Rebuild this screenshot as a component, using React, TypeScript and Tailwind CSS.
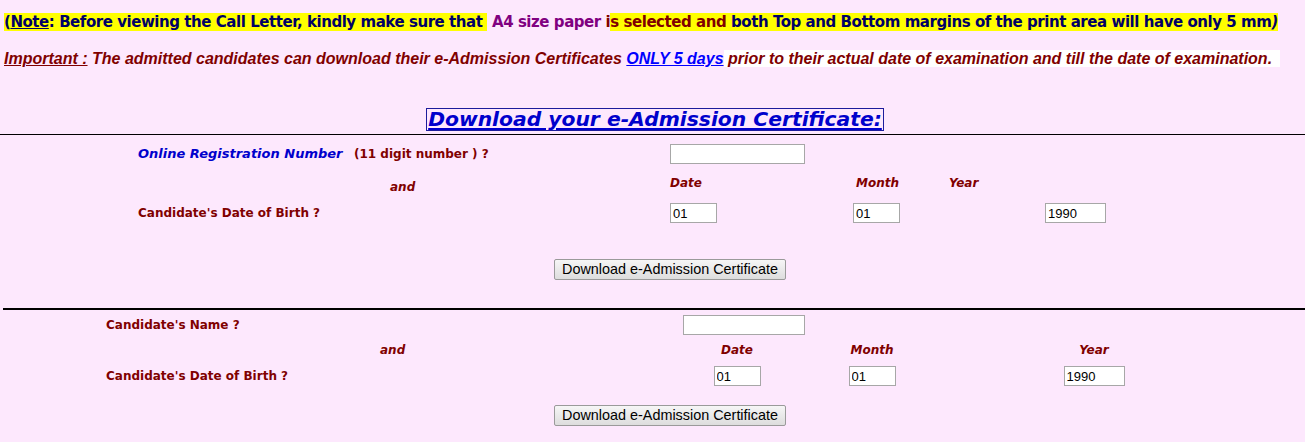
import React from 'react'

const verdana = { fontFamily: '"DejaVu Sans", Verdana, sans-serif' }

function Box({ w, value }: { w: string; value?: string }) {
  return (
    <input
      defaultValue={value}
      className={`${w} h-[20px] border border-[#a7a7a7] bg-white px-[2px] text-[13px] font-normal not-italic text-black outline-none font-['Liberation_Sans',Arial,sans-serif]`}
    />
  )
}

function DownloadButton() {
  return (
    <button className="h-[21px] w-[232px] rounded-[2px] border border-[#9a9a9a] bg-gradient-to-b from-[#f6f6f6] to-[#dddddd] text-[14.4px] font-normal leading-none text-black font-['Liberation_Sans',Arial,sans-serif]">
      Download e-Admission Certificate
    </button>
  )
}

export default function App() {
  return (
    <div className="min-h-screen w-full bg-[#fde8fd] font-['DejaVu_Sans',Verdana,sans-serif]">
      {/* note line */}
      <div className="flex h-[45px] items-center pl-[4px]">
        <p className="whitespace-nowrap text-[15px] font-bold leading-[19px] tracking-[-0.45px]">
          <span className="bg-[#ffff00] text-[#000066]">
            (<u>Note</u>: Before viewing the Call Letter, kindly make sure that&nbsp;
          </span>
          <span className="text-[#800080]">&nbsp;A4 size paper </span>
          <span className="text-[#800000]">i</span>
          <span className="bg-[#ffff00] text-[#800000]">s selected and</span>
          <span className="bg-[#ffff00] text-[#000066]">
            {' '}both Top and Bottom margins of the print area will have only 5 mm<i>)</i>
          </span>
        </p>
      </div>

      <div className="flex h-[27px] items-center pl-[4px]">
        <p className="whitespace-nowrap text-[16px] font-bold italic leading-[19px] text-[#800000] font-['Liberation_Sans',Arial,sans-serif]">
          <u>Important :</u> The admitted candidates can download their e-Admission Certificates{' '}
          <u className="text-[#0000ff]">ONLY 5 days</u>
          <span className="bg-white pr-[8px]"> prior to their actual date of examination and till the date of examination.</span>
        </p>
      </div>

      {/* heading */}
      <div className="flex h-[59px] items-end justify-center pl-[5px]">
        <div className="flex h-[23px] items-end border border-[#1c1c9c] px-[1px]">
          <span className="whitespace-nowrap text-[20.3px] font-bold italic leading-[22px] text-[#0000cc] underline" style={verdana}>
            Download your e-Admission Certificate:
          </span>
        </div>
      </div>
      <div className="h-[3px]" />
      <div className="h-px bg-black" />

      {/* section 1 */}
      <div className="text-[12px] font-bold text-[#800000]">
        <div className="flex h-[38px] items-center pl-[138px]">
          <div className="flex w-[532px] items-center">
            <span className="w-[216px] text-[13px] italic text-[#0000cc]">Online Registration Number</span>
            <span>(11 digit number ) ?</span>
          </div>
          <Box w="w-[135px]" />
        </div>
        <div className="flex h-[26px] items-start pl-[138px] italic">
          <span className="w-[532px] pl-[252px] pt-[5px]">and</span>
          <span className="w-[186px] pt-[1px]">Date</span>
          <span className="w-[93px] pt-[1px]">Month</span>
          <span className="pt-[1px]">Year</span>
        </div>
        <div className="flex h-[28px] items-center pl-[138px]">
          <span className="w-[532px]">Candidate's Date of Birth ?</span>
          <div className="w-[183px]">
            <Box w="w-[47px]" value="01" />
          </div>
          <div className="w-[192px]">
            <Box w="w-[47px]" value="01" />
          </div>
          <Box w="w-[61px]" value="1990" />
        </div>
        <div className="h-[32px]" />
        <div className="pl-[554px]">
          <DownloadButton />
        </div>
        <div className="h-[28px]" />
      </div>
      <div className="ml-[3px] h-[2px] bg-black" />

      {/* section 2 */}
      <div className="text-[12px] font-bold text-[#800000]">
        <div className="flex h-[30px] items-center pl-[106px]">
          <span className="w-[577px]">Candidate's Name ?</span>
          <Box w="w-[122px]" />
        </div>
        <div className="flex h-[20px] items-center pl-[106px] italic">
          <span className="w-[577px] pl-[274px]">and</span>
          <span className="w-[108px] text-center">Date</span>
          <span className="w-[162px] text-center">Month</span>
          <span className="w-[282px] text-center">Year</span>
        </div>
        <div className="flex h-[32px] items-center pl-[106px]">
          <span className="w-[577px]">Candidate's Date of Birth ?</span>
          <div className="flex w-[108px] justify-center">
            <Box w="w-[47px]" value="01" />
          </div>
          <div className="flex w-[162px] justify-center">
            <Box w="w-[47px]" value="01" />
          </div>
          <div className="flex w-[282px] justify-center">
            <Box w="w-[61px]" value="1990" />
          </div>
        </div>
        <div className="h-[13px]" />
        <div className="pl-[554px]">
          <DownloadButton />
        </div>
        <div className="h-[15px]" />
      </div>
    </div>
  )
}
